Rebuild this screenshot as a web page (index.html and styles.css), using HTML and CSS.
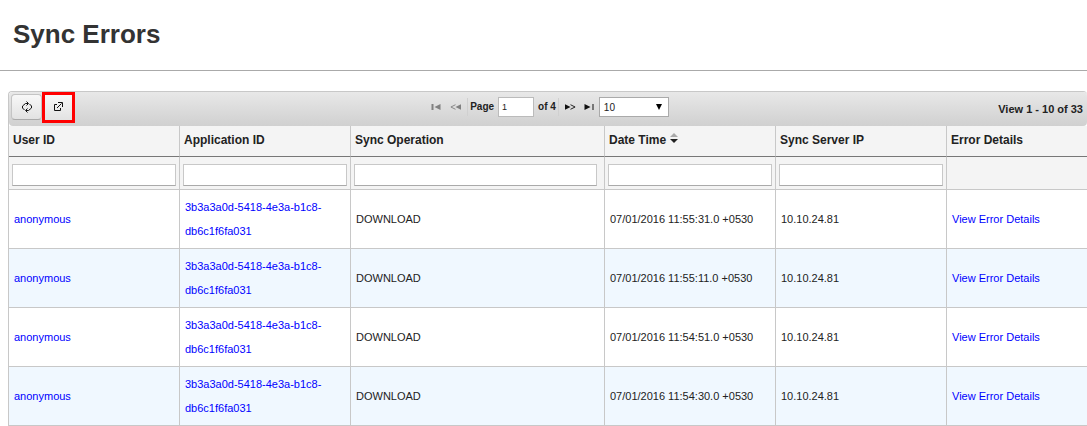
FILE: index.html
```html
<!DOCTYPE html>
<html lang="en">
<head>
<meta charset="utf-8">
<title>Sync Errors</title>
<link rel="stylesheet" href="styles.css">
</head>
<body>
<header class="page-header"><h1>Sync Errors</h1></header>
<main class="grid">
  <div class="toolbar">
    <div class="actions">
      <button class="tool" type="button" aria-label="Refresh">
        <svg class="icon" viewBox="0 0 12 12"><path d="M7 2.500H4.500L1.500 5v2L3.500 9M5.500 0.500l2 2-2 2M5 9.500h2.500L10.500 7V5L8.500 3M6.500 7.500l-2 2 2 2"/></svg>
      </button>
      <button class="tool highlighted" type="button" aria-label="Export">
        <svg class="icon" viewBox="0 0 12 12"><path d="M5 3.500H2.500v6h6V7M5 7l4.500-4.500M6 1.500h4.500V6"/></svg>
      </button>
    </div>
    <div class="pager">
      <button class="nav" type="button" aria-label="First page" disabled><svg viewBox="0 0 10 8"><path d="M0 1h2v6H0zM9 1v6L3 4z"/></svg></button>
      <button class="nav" type="button" aria-label="Previous page" disabled><svg viewBox="0 0 12 8"><path d="M12 1v6L6 4z"/><path class="line" d="M6 1.500L1 4l5 2.500"/></svg></button>
      <span class="divider"></span>
      <label for="page">Page</label>
      <input class="page-input" id="page" type="text" value="1">
      <span class="total">of 4</span>
      <span class="divider"></span>
      <button class="nav" type="button" aria-label="Next page"><svg viewBox="0 0 12 8"><path d="M0 1v6l6-3z"/><path class="line" d="M6 1.500L11 4 6 6.500"/></svg></button>
      <button class="nav" type="button" aria-label="Last page"><svg viewBox="0 0 10 8"><path d="M8 1h1v6H8zM0 1v6l6-3z"/></svg></button>
      <span class="size-wrap">
        <select class="size" aria-label="Rows per page"><option>10</option><option>20</option></select>
        <svg class="caret" viewBox="0 0 6 6"><path d="M0 0h6L3 6z"/></svg>
      </span>
    </div>
    <div class="summary">View 1 - 10 of 33</div>
  </div>
  <table class="data">
    <colgroup><col class="c-narrow"><col class="c-narrow"><col class="c-wide"><col class="c-narrow"><col class="c-narrow"><col class="c-last"></colgroup>
    <thead>
      <tr class="titles">
        <th>User ID</th><th>Application ID</th><th>Sync Operation</th>
        <th>Date Time <svg class="sort" viewBox="0 0 8 10"><path class="asc" d="M0 4l4-4 4 4z"/><path d="M0 6h8l-4 4z"/></svg></th>
        <th>Sync Server IP</th><th>Error Details</th>
      </tr>
      <tr class="filters">
        <td><input type="text" aria-label="Filter User ID"></td>
        <td><input type="text" aria-label="Filter Application ID"></td>
        <td class="operation"><input type="text" aria-label="Filter Sync Operation"></td>
        <td><input type="text" aria-label="Filter Date Time"></td>
        <td><input type="text" aria-label="Filter Sync Server IP"></td>
        <td></td>
      </tr>
    </thead>
    <tbody>
      <tr><td><a href="#">anonymous</a></td><td><a href="#">3b3a3a0d-5418-4e3a-b1c8-db6c1f6fa031</a></td><td>DOWNLOAD</td><td>07/01/2016 11:55:31.0 +0530</td><td>10.10.24.81</td><td><a href="#">View Error Details</a></td></tr>
      <tr><td><a href="#">anonymous</a></td><td><a href="#">3b3a3a0d-5418-4e3a-b1c8-db6c1f6fa031</a></td><td>DOWNLOAD</td><td>07/01/2016 11:55:11.0 +0530</td><td>10.10.24.81</td><td><a href="#">View Error Details</a></td></tr>
      <tr><td><a href="#">anonymous</a></td><td><a href="#">3b3a3a0d-5418-4e3a-b1c8-db6c1f6fa031</a></td><td>DOWNLOAD</td><td>07/01/2016 11:54:51.0 +0530</td><td>10.10.24.81</td><td><a href="#">View Error Details</a></td></tr>
      <tr><td><a href="#">anonymous</a></td><td><a href="#">3b3a3a0d-5418-4e3a-b1c8-db6c1f6fa031</a></td><td>DOWNLOAD</td><td>07/01/2016 11:54:30.0 +0530</td><td>10.10.24.81</td><td><a href="#">View Error Details</a></td></tr>
    </tbody>
  </table>
</main>
</body>
</html>
```

FILE: styles.css
```css
* { box-sizing: border-box; }
body {
  margin: 0;
  background: #fff;
  color: #222;
  font: 11px/24px "Liberation Sans", Arial, sans-serif;
}
.page-header {
  padding: 18px 13px 20px;
  border-bottom: 1px solid #aaa;
}
h1 { margin: 0; color: #333; font-size: 26px; line-height: 32px; }
.grid {
  margin: 20px 0 0 8px;
  border: 1px solid #c8c8c8;
  border-right: 0;
  border-radius: 4px 4px 0 0;
}
.toolbar {
  display: grid;
  grid-template-columns: 1fr auto 1fr;
  align-items: center;
  height: 34px;
  background: linear-gradient(#e8e8e8, #d0d0d0);
  border-radius: 4px;
  font-weight: bold;
}
.actions { display: flex; align-items: center; padding: 0 0 4px 2px; }
.tool {
  display: flex;
  align-items: center;
  justify-content: center;
  width: 31px;
  height: 26px;
  padding: 0;
  border: 1px solid #c4c4c4;
  border-bottom-color: #aaa;
  border-radius: 4px;
  background: linear-gradient(#f8f8f8, #e2e2e2);
}
.highlighted {
  width: 33px;
  height: 31px;
  margin: -3px 0;
  padding-right: 2px;
  border: 3px solid #f00;
  border-radius: 0;
}
.icon { width: 12px; height: 12px; fill: none; stroke: #111; }
.pager { display: flex; align-items: center; padding-bottom: 4px; font-size: 10px; }
.nav { display: flex; padding: 0 4px; border: 0; background: none; fill: #111; }
.nav svg { width: 11px; height: 8px; }
.nav:disabled { opacity: 0.45; }
.line { fill: none; stroke: #111; }
.divider { width: 1px; height: 18px; margin: 0 2px; background: #d0d0d0; }
.page-input {
  width: 36px;
  height: 20px;
  margin: 0 4px;
  padding: 0 3px;
  border: 1px solid #bbb;
  color: #222;
  font: 9px "Liberation Sans", Arial, sans-serif;
}
.size-wrap { position: relative; }
.size {
  display: block;
  width: 70px;
  height: 20px;
  padding: 0 4px;
  appearance: none;
  border: 1px solid #aaa;
  border-radius: 0;
  background: #fff;
  color: #222;
  font: 10px "Liberation Sans", Arial, sans-serif;
}
.caret { position: absolute; top: 7px; right: 7px; width: 6px; height: 6px; pointer-events: none; }
.summary { padding-right: 4px; text-align: right; }
.data { width: 100%; table-layout: fixed; border-collapse: separate; border-spacing: 0; }
.c-narrow { width: 171px; }
.c-wide { width: 254px; }
th, td { padding: 0 5px; border: 0 solid #c8c8c8; border-width: 0 1px 1px 0; text-align: left; }
th:last-child, td:last-child { border-right: 0; }
thead { background: #f4f4f4; }
.titles th { height: 31px; padding: 0 4px 3px; border-bottom-color: #777; font-size: 12px; }
.sort { width: 8px; height: 10px; margin-left: 1px; vertical-align: 1px; fill: #222; }
.asc { fill: #aaa; }
.filters td { height: 33px; padding: 4px 3px 0; }
.filters .operation { padding-right: 7px; }
.filters input {
  display: block;
  width: 100%;
  height: 22px;
  border: 1px solid #c8c8c8;
  border-bottom-color: #aaa;
}
tbody td { height: 59px; }
tbody tr:nth-child(even) { background: #f0f8ff; }
a { color: #00f; text-decoration: none; }
```
